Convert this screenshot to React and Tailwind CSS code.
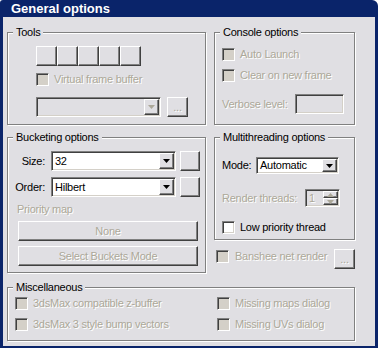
import React from "react";

// classic win32 bevels
const raised =
  "border border-t-white border-l-white border-r-[#404040] border-b-[#404040] shadow-[inset_-1px_-1px_0_#808080] bg-[#e0dfe3]";
const sunken =
  "border border-t-[#808080] border-l-[#808080] border-r-white border-b-white shadow-[inset_1px_1px_0_#404040,inset_-1px_-1px_0_#d4d0c8]";
const dim = "text-[#aca899] [text-shadow:1px_1px_0_#fff]";

const Tri = ({ up = false, color = "#000" }) => (
  <svg width="7" height="4" viewBox="0 0 7 4" className={up ? "rotate-180" : ""}>
    <path d="M0 0h7L3.5 4z" fill={color} />
  </svg>
);

const Check = ({ disabled = true, className = "" }) => (
  <span
    className={`block h-[13px] w-[13px] shrink-0 ${sunken} ${
      disabled ? "bg-[#d4d0c8]" : "bg-white"
    } ${className}`}
  />
);

const Option = ({ label, disabled = true, className = "" }) => (
  <div className={`flex items-center ${className}`}>
    <Check disabled={disabled} />
    <span className={`ml-[5px] ${disabled ? dim : ""}`}>{label}</span>
  </div>
);

const Select = ({ value, disabled = false, className = "" }) => (
  <div
    className={`flex items-stretch p-[1px] ${sunken} ${
      disabled ? "bg-[#e0dfe3]" : "bg-white"
    } ${className}`}
  >
    <span className="flex flex-1 items-center pl-[2px]">{value}</span>
    <span className={`flex w-[15px] items-center justify-center ${raised}`}>
      <Tri color={disabled ? "#aca899" : "#000"} />
    </span>
  </div>
);

const Btn = ({ children, className = "", disabled = true }) => (
  <div
    className={`flex items-center justify-center ${raised} ${disabled ? dim : ""} ${className}`}
  >
    {children}
  </div>
);

const Group = ({ title, className = "", children }) => (
  <div
    className={`flex flex-col border border-[#808080] shadow-[1px_1px_0_#fff,inset_1px_1px_0_#fff] ${className}`}
  >
    <span className="-mt-[7px] ml-[5px] w-fit bg-[#e0dfe3] px-[3px]">{title}</span>
    {children}
  </div>
);

export default function App() {
  return (
    <div className="flex h-[348px] w-[378px] flex-col rounded-tl-[3px] rounded-tr-[6px] bg-[#0a246a] font-['Tahoma','Liberation_Sans',Arial,sans-serif] text-[11px] leading-[13px] tracking-[-0.25px] text-black">
      {/* title bar */}
      <div className="flex h-[17px] items-center pl-[11px] text-[13px] font-bold tracking-normal text-white">
        General options
      </div>

      <div className="mx-[3px] mb-[2px] flex flex-1 flex-col bg-[#e0dfe3] pl-[4px] pt-[15px]">
        {/* row 1 */}
        <div className="flex gap-[8px]">
          <Group title="Tools" className="h-[93px] w-[199px]">
            <div className="ml-[28px] mt-[7px] flex">
              {[0, 1, 2, 3, 4].map((i) => (
                <Btn key={i} className="h-[20px] w-[21px]" />
              ))}
            </div>
            <Option label="Virtual frame buffer" className="ml-[28px] mt-[7px]" />
            <div className="ml-[28px] mt-[11px] flex">
              <Select disabled className="h-[20px] w-[125px]" />
              <Btn className="ml-[6px] h-[20px] w-[21px]">...</Btn>
            </div>
          </Group>

          <Group title="Console options" className="h-[93px] w-[141px]">
            <Option label="Auto Launch" className="ml-[7px] mt-[9px]" />
            <Option label="Clear on new frame" className="ml-[7px] mt-[8px]" />
            <div className="ml-[7px] mt-[12px] flex items-center">
              <span className={`w-[73px] ${dim}`}>Verbose level:</span>
              <div className={`h-[20px] w-[49px] ${sunken}`} />
            </div>
          </Group>
        </div>

        {/* row 2 */}
        <div className="mt-[12px] flex gap-[8px]">
          <Group title="Bucketing options" className="h-[136px] w-[199px]">
            <div className="mt-[7px] flex items-center">
              <span className="w-[37px] text-right">Size:</span>
              <Select value="32" className="ml-[6px] h-[20px] w-[125px]" />
              <Btn className="ml-[4px] h-[20px] w-[20px]" />
            </div>
            <div className="mt-[6px] flex items-center">
              <span className="w-[37px] text-right">Order:</span>
              <Select value="Hilbert" className="ml-[6px] h-[20px] w-[125px]" />
              <Btn className="ml-[4px] h-[20px] w-[20px]" />
            </div>
            <span className={`ml-[9px] mt-[6px] ${dim}`}>Priority map</span>
            <Btn className="ml-[10px] mt-[5px] h-[20px] w-[180px]">None</Btn>
            <Btn className="ml-[10px] mt-[5px] h-[20px] w-[180px]">Select Buckets Mode</Btn>
          </Group>

          <div className="flex w-[141px] flex-col">
            <Group title="Multithreading options" className="h-[103px] w-[141px]">
              <div className="ml-[7px] mt-[13px] flex items-center">
                <span className="w-[34px]">Mode:</span>
                <Select value="Automatic" className="h-[17px] w-[83px]" />
              </div>
              <div className="ml-[7px] mt-[15px] flex items-center">
                <span className={`w-[83px] ${dim}`}>Render threads:</span>
                <div className={`flex h-[18px] w-[35px] p-[1px] ${sunken} bg-[#e0dfe3]`}>
                  <span className={`flex flex-1 items-center pl-[2px] ${dim}`}>1</span>
                  <div className="flex w-[15px] flex-col">
                    <span className={`flex flex-1 items-center justify-center ${raised}`}>
                      <Tri up color="#aca899" />
                    </span>
                    <span className={`flex flex-1 items-center justify-center ${raised}`}>
                      <Tri color="#aca899" />
                    </span>
                  </div>
                </div>
              </div>
              <Option label="Low priority thread" disabled={false} className="ml-[7px] mt-[14px]" />
            </Group>
            <div className="mt-[9px] flex items-start">
              <Check className="ml-[2px] mt-[1px]" />
              <span className={`ml-[6px] mt-[1px] ${dim}`}>Banshee net render</span>
              <Btn className="ml-auto h-[20px] w-[21px]">...</Btn>
            </div>
          </div>
        </div>

        {/* row 3 */}
        <Group title="Miscellaneous" className="mt-[14px] h-[54px] w-[348px]">
          <div className="ml-[7px] mt-[3px] grid grid-cols-[202px_1fr] gap-y-[8px]">
            <Option label="3dsMax compatible z-buffer" />
            <Option label="Missing maps dialog" />
            <Option label="3dsMax 3 style bump vectors" />
            <Option label="Missing UVs dialog" />
          </div>
        </Group>
      </div>
    </div>
  );
}
